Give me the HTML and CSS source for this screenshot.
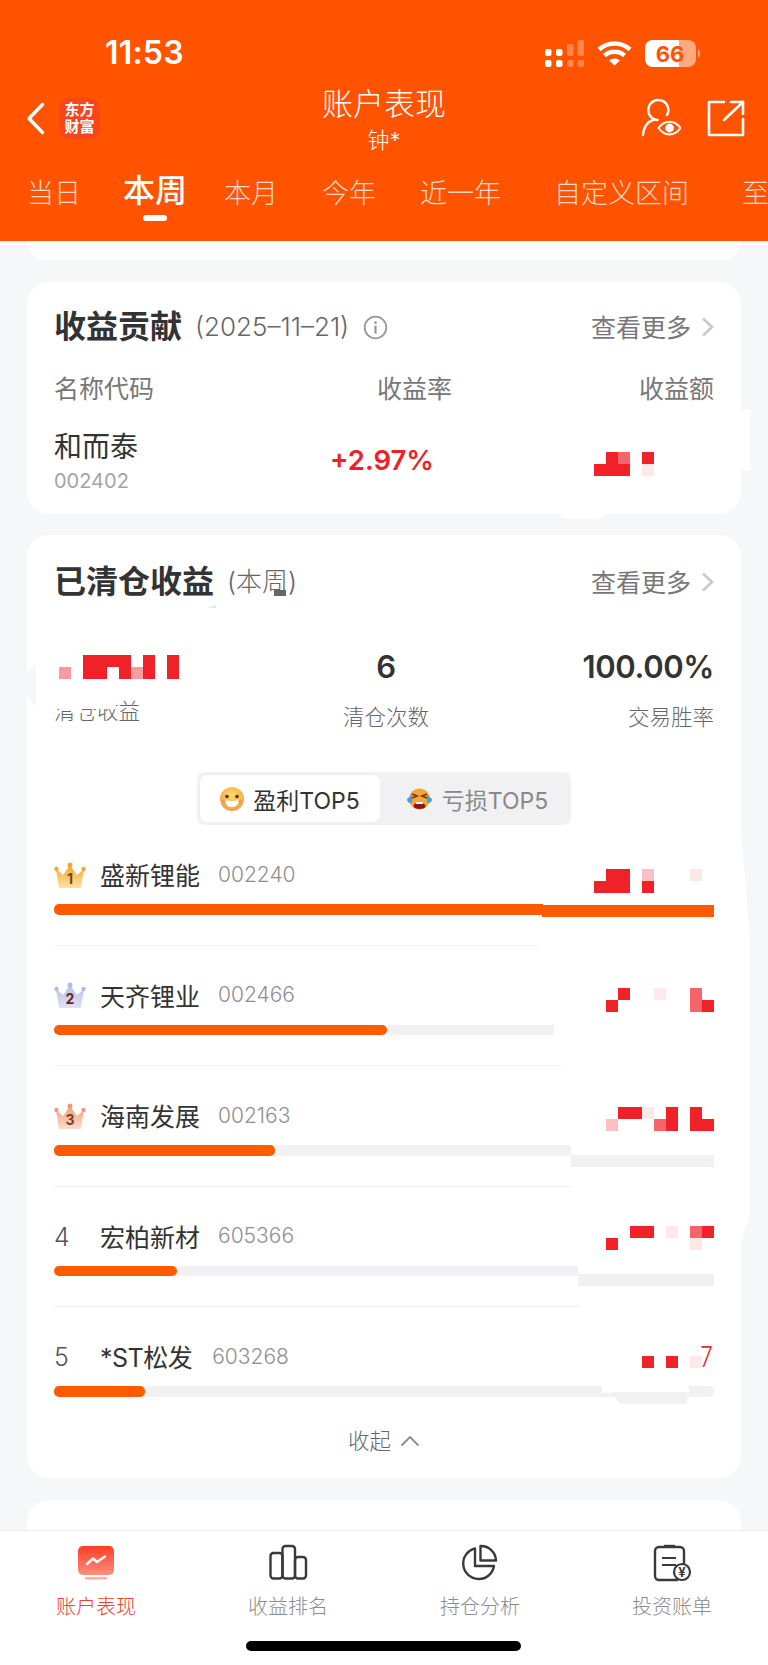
FILE: index.html
```html
<!DOCTYPE html>
<html lang="zh-CN">
<head>
    <meta charset="UTF-8">
    <meta name="viewport" content="width=device-width, initial-scale=1.0">
    <title>账户表现</title>
    <link rel="stylesheet" href="styles.css">
</head>
<body>
<div class="page">
    <header class="top">
        <div class="status">
            <span class="clock">11:53</span>
            <svg class="status-icons" width="156" height="28" viewBox="545 38 156 28">
                <g fill="#fff">
                    <rect x="545" y="47" width="6.5" height="7" rx="2"/>
                    <rect x="545" y="58" width="6.5" height="7" rx="2"/>
                    <rect x="556" y="47" width="6.5" height="7" rx="2"/>
                    <rect x="556" y="58" width="6.5" height="7" rx="2"/>
                </g>
                <g fill="#fff" opacity="0.3">
                    <rect x="567" y="42" width="6.5" height="12" rx="2"/>
                    <rect x="567" y="58" width="6.5" height="7" rx="2"/>
                    <rect x="577.5" y="38" width="6.5" height="16" rx="2"/>
                    <rect x="577.5" y="58" width="6.5" height="7" rx="2"/>
                </g>
                <g fill="none" stroke="#fff" stroke-width="4.6">
                    <path d="M599 47.5 C608 39.5 621 39.5 630 47.5"/>
                    <path d="M604.5 53.5 C610 48.5 619 48.5 624.5 53.5"/>
                </g>
                <path d="M609 58.5 C612 55.8 617 55.8 620 58.5 L614.5 63.5 Z" fill="#fff"/>
                <rect x="645" y="38" width="51" height="27" rx="8" fill="#fff" opacity="0.5"/>
                <path d="M653 38 H679 V65 H653 A8 8 0 0 1 645 57 V46 A8 8 0 0 1 653 38 Z" fill="#fff"/>
                <path d="M698 47 C700.5 48 700.5 55 698 56 Z" fill="#fff" opacity="0.5"/>
                <text class="battery-text" x="670" y="59.5" text-anchor="middle">66</text>
            </svg>
        </div>

        <div class="nav">
            <div class="nav-side">
                <svg class="back" width="19" height="33" viewBox="0 0 19 33">
                    <path d="M16.5 2.5 L3 16.5 L16.5 30.5" fill="none" stroke="#fff" stroke-width="3.4" stroke-linecap="round" stroke-linejoin="round"/>
                </svg>
                <div class="logo">东方<br>财富</div>
            </div>
            <div class="nav-title">
                <div class="title">账户表现</div>
                <div class="subtitle">钟*</div>
            </div>
            <div class="nav-side nav-right">
                <svg width="40" height="40" viewBox="0 0 40 40" fill="none" stroke="#fff" stroke-width="2.4" stroke-linecap="round">
                    <path d="M2 37 C2.5 28 7 23.5 13 21.5"/>
                    <path d="M26 17 A10 10 0 1 0 16.5 22"/>
                    <path d="M17.5 30 C23.5 21.5 33.5 21.5 39.5 30 C33.5 38.5 23.5 38.5 17.5 30 Z" stroke-width="2"/>
                    <circle cx="28.5" cy="30" r="4.4" fill="#fff" stroke="none"/>
                </svg>
                <svg width="38" height="38" viewBox="0 0 38 38" fill="none" stroke="#fff" stroke-width="2.6" stroke-linecap="round" stroke-linejoin="round">
                    <path d="M17 3 H2 V36 H36 V20"/>
                    <path d="M17 21 L36 3"/>
                    <path d="M24 3 H36 V15"/>
                </svg>
            </div>
        </div>

        <nav class="tabs">
            <span class="tab">当日</span>
            <span class="tab tab-active">本周</span>
            <span class="tab">本月</span>
            <span class="tab">今年</span>
            <span class="tab">近一年</span>
            <span class="tab tab-far">自定义区间</span>
            <span class="tab tab-far">至今</span>
        </nav>
    </header>

    <main class="content">
        <div class="stub"></div>

        <section class="card card-contrib">
            <span class="patch patch-side"></span>
            <span class="patch patch-bump"></span>
            <div class="card-head">
                <h2>收益贡献</h2>
                <span class="head-note">(2025–11–21)</span>
                <svg class="info" width="25" height="25" viewBox="0 0 25 25">
                    <circle cx="12.5" cy="12.5" r="10.8" fill="none" stroke="#999" stroke-width="1.8"/>
                    <circle cx="12.5" cy="7.6" r="1.4" fill="#999"/>
                    <rect x="11.4" y="10.6" width="2.2" height="8" fill="#999"/>
                </svg>
                <a class="more"><span class="more-text">查看更多</span>
                    <svg width="13" height="20" viewBox="0 0 13 20"><path d="M2 1.5 L11 10 L2 18.5" fill="none" stroke="#c9c9c9" stroke-width="2.6"/></svg>
                </a>
            </div>
            <div class="table-head">
                <span class="th-name">名称代码</span>
                <span>收益率</span>
                <span class="th-amount">收益额</span>
            </div>
            <div class="table-row">
                <div class="stock">
                    <div class="stock-name">和而泰</div>
                    <div class="stock-code">002402</div>
                </div>
                <div class="rate">+2.97%</div>
                <svg class="mosaic mosaic-table" width="120" height="24" viewBox="0 0 10 2" shape-rendering="crispEdges">
                    <rect class="m-red" x="1" y="0" width="1" height="1"/>
                    <rect class="m-mid" x="2" y="0" width="1" height="1"/>
                    <rect class="m-red" x="4" y="0" width="1" height="1"/>
                    <rect class="m-red" x="0" y="1" width="3" height="1"/>
                    <rect class="m-pale" x="4" y="1" width="1" height="1"/>
                </svg>
            </div>
        </section>

        <section class="card card-closed">
            <span class="patch patch-notch"></span>
            <span class="patch patch-edge"></span>
            <span class="patch patch-smudge"></span>
            <span class="patch patch-line"></span>
            <div class="card-head">
                <h2>已清仓收益</h2>
                <span class="head-note head-note-week">(本周)</span>
                <a class="more"><span class="more-text">查看更多</span>
                    <svg width="13" height="20" viewBox="0 0 13 20"><path d="M2 1.5 L11 10 L2 18.5" fill="none" stroke="#c9c9c9" stroke-width="2.6"/></svg>
                </a>
            </div>

            <div class="metrics">
                <div class="metric metric-left">
                    <svg class="mosaic-total" width="120" height="24" viewBox="0 0 10 2" shape-rendering="crispEdges">
                        <rect class="m-soft" x="0" y="1" width="1" height="1"/>
                        <rect class="m-red" x="2" y="0" width="4" height="1"/>
                        <rect class="m-red" x="2" y="1" width="2" height="1"/>
                        <rect class="m-red" x="5" y="1" width="1" height="1"/>
                        <rect class="m-soft" x="6" y="1" width="1" height="1"/>
                        <rect class="m-red" x="7" y="0" width="1" height="2"/>
                        <rect class="m-red" x="9" y="0" width="1" height="2"/>
                    </svg>
                    <div class="metric-label metric-label-cut">清仓收益
                        <span class="erase erase-top"></span>
                        <span class="erase erase-gap"></span>
                    </div>
                </div>
                <div class="metric metric-mid">
                    <div class="metric-value">6</div>
                    <div class="metric-label">清仓次数</div>
                </div>
                <div class="metric metric-right">
                    <div class="metric-value">100.00%</div>
                    <div class="metric-label">交易胜率</div>
                </div>
            </div>

            <div class="segment">
                <div class="seg-item seg-active">
                    <svg width="24" height="24" viewBox="0 0 24 24">
                        <defs>
                            <radialGradient id="smile" cx="50%" cy="35%" r="70%">
                                <stop offset="0" stop-color="#ffdc6a"/>
                                <stop offset="1" stop-color="#f29a3c"/>
                            </radialGradient>
                        </defs>
                        <circle cx="12" cy="12" r="12" fill="url(#smile)"/>
                        <circle cx="7" cy="9.5" r="1.8" fill="#5b3410"/>
                        <circle cx="17" cy="9.5" r="1.8" fill="#5b3410"/>
                        <path d="M5 12.5 C9 14.5 15 14.5 19 12.5 C18.5 18.5 15 20 12 20 C9 20 5.500 18.5 5 12.5 Z" fill="#fff"/>
                        <circle cx="3.800" cy="14.500" r="2" fill="#f58a5a" opacity="0.6"/>
                        <circle cx="20.200" cy="14.500" r="2" fill="#f58a5a" opacity="0.6"/>
                    </svg>
                    <span>盈利TOP5</span>
                </div>
                <div class="seg-item seg-loss">
                    <svg width="27" height="24" viewBox="0 0 27 24">
                        <circle cx="13.500" cy="12" r="10.500" fill="#f7a33b"/>
                        <path d="M6 7 L11 9 L6 11 M21 7 L16 9 L21 11" fill="none" stroke="#6b3b12" stroke-width="1.600"/>
                        <path d="M1 12 L6 8 L6 15 C5 17 1 16 1 12 Z M26 12 L21 8 L21 15 C22 17 26 16 26 12 Z" fill="#3e9ee8"/>
                        <path d="M7.500 20 C8 13 19 13 19.500 20 C17 22.500 10 22.500 7.500 20 Z" fill="#8f1414"/>
                        <path d="M9.500 15.800 C11.500 14.500 15.500 14.500 17.500 15.800 L17 17 H10 Z" fill="#fff"/>
                    </svg>
                    <span class="seg-muted">亏损TOP5</span>
                </div>
            </div>

            <div class="rank-row">
                <div class="rank-head">
                    <svg class="crown" width="32" height="27" viewBox="0 0 32 27">
                        <defs>
                            <linearGradient id="gold" x1="0" y1="0" x2="0" y2="1"><stop offset="0" stop-color="#f4a52c"/><stop offset="1" stop-color="#fce3a4"/></linearGradient>
                        </defs>
                        <path d="M5 26 L2 7 L9 13 L16 3 L23 13 L30 7 L27 26 Z" fill="url(#gold)"/>
                        <circle cx="16" cy="3" r="2.500" fill="#f4a52c"/><circle cx="2.500" cy="7" r="2.200" fill="#f4a52c"/><circle cx="29.500" cy="7" r="2.200" fill="#f4a52c"/>
                        <text class="crown-num" x="16" y="22" text-anchor="middle" fill="#6d4a12">1</text>
                    </svg>
                    <span class="rank-name">盛新锂能</span>
                    <span class="rank-code">002240</span>
                    <svg class="mosaic mosaic-1" width="120" height="24" viewBox="0 0 10 2" shape-rendering="crispEdges">
                        <rect class="m-red" x="1" y="0" width="2" height="2"/>
                        <rect class="m-light" x="4" y="0" width="1" height="1"/>
                        <rect class="m-pale" x="8" y="0" width="1" height="1"/>
                        <rect class="m-red" x="0" y="1" width="1" height="1"/>
                        <rect class="m-red" x="4" y="1" width="1" height="1"/>
                    </svg>
                </div>
                <div class="bar bar-short-1">
                    <div class="bar-fill bar-fill-flat" style="width: 100%"></div>
                    <span class="bar-piece piece-1"></span>
                </div>
            </div>
            <div class="rank-line line-1"></div>

            <div class="rank-row">
                <div class="rank-head">
                    <svg class="crown" width="32" height="27" viewBox="0 0 32 27">
                        <defs>
                            <linearGradient id="silver" x1="0" y1="0" x2="0" y2="1"><stop offset="0" stop-color="#b8bfe6"/><stop offset="1" stop-color="#dfe2f5"/></linearGradient>
                        </defs>
                        <path d="M5 26 L2 7 L9 13 L16 3 L23 13 L30 7 L27 26 Z" fill="url(#silver)"/>
                        <circle cx="16" cy="3" r="2.500" fill="#b4bbe2"/><circle cx="2.500" cy="7" r="2.200" fill="#b4bbe2"/><circle cx="29.500" cy="7" r="2.200" fill="#b4bbe2"/>
                        <text class="crown-num" x="16" y="22" text-anchor="middle" fill="#6a2417">2</text>
                    </svg>
                    <span class="rank-name">天齐锂业</span>
                    <span class="rank-code">002466</span>
                    <svg class="mosaic mosaic-2" width="120" height="24" viewBox="0 0 10 2" shape-rendering="crispEdges">
                        <rect class="m-red" x="2" y="0" width="1" height="1"/>
                        <rect class="m-pale" x="5" y="0" width="1" height="1"/>
                        <rect class="m-mid" x="8" y="0" width="1" height="2"/>
                        <rect class="m-red" x="1" y="1" width="1" height="1"/>
                        <rect class="m-red" x="9" y="1" width="1" height="1"/>
                    </svg>
                </div>
                <div class="bar bar-short-2">
                    <div class="bar-fill" style="width: 66.6%"></div>
                </div>
            </div>
            <div class="rank-line line-2"></div>

            <div class="rank-row">
                <div class="rank-head">
                    <svg class="crown" width="32" height="27" viewBox="0 0 32 27">
                        <defs>
                            <linearGradient id="copper" x1="0" y1="0" x2="0" y2="1"><stop offset="0" stop-color="#ee9f7d"/><stop offset="1" stop-color="#fbdccb"/></linearGradient>
                        </defs>
                        <path d="M5 26 L2 7 L9 13 L16 3 L23 13 L30 7 L27 26 Z" fill="url(#copper)"/>
                        <circle cx="16" cy="3" r="2.500" fill="#ec9b78"/><circle cx="2.500" cy="7" r="2.200" fill="#ec9b78"/><circle cx="29.500" cy="7" r="2.200" fill="#ec9b78"/>
                        <text class="crown-num" x="16" y="22" text-anchor="middle" fill="#7c3d22">3</text>
                    </svg>
                    <span class="rank-name">海南发展</span>
                    <span class="rank-code">002163</span>
                    <svg class="mosaic mosaic-3" width="120" height="24" viewBox="0 0 10 2" shape-rendering="crispEdges">
                        <rect class="m-red" x="2" y="0" width="2" height="1"/>
                        <rect class="m-pale" x="4" y="0" width="1" height="1"/>
                        <rect class="m-red" x="6" y="0" width="1" height="2"/>
                        <rect class="m-red" x="8" y="0" width="1" height="2"/>
                        <rect class="m-light" x="1" y="1" width="1" height="1"/>
                        <rect class="m-mid" x="5" y="1" width="1" height="1"/>
                        <rect class="m-red" x="9" y="1" width="1" height="1"/>
                    </svg>
                </div>
                <div class="bar bar-short-3">
                    <div class="bar-fill" style="width: 42.7%"></div>
                    <span class="bar-piece bar-piece-grey piece-3"></span>
                </div>
            </div>
            <div class="rank-line line-3"></div>

            <div class="rank-row">
                <div class="rank-head">
                    <span class="rank-num">4</span>
                    <span class="rank-name">宏柏新材</span>
                    <span class="rank-code">605366</span>
                    <svg class="mosaic mosaic-4" width="120" height="24" viewBox="0 0 10 2" shape-rendering="crispEdges">
                        <rect class="m-red" x="3" y="0" width="2" height="1"/>
                        <rect class="m-pale" x="6" y="0" width="1" height="1"/>
                        <rect class="m-mid" x="8" y="0" width="1" height="1"/>
                        <rect class="m-red" x="9" y="0" width="1" height="1"/>
                        <rect class="m-red" x="1" y="1" width="1" height="1"/>
                        <rect class="m-pale" x="8" y="1" width="1" height="1"/>
                    </svg>
                </div>
                <div class="bar bar-short-4">
                    <div class="bar-fill" style="width: 23.5%"></div>
                    <span class="bar-piece bar-piece-grey piece-4"></span>
                </div>
            </div>
            <div class="rank-line line-4"></div>

            <div class="rank-row rank-row-last">
                <div class="rank-head">
                    <span class="rank-num">5</span>
                    <span class="rank-name rank-name-st">*ST松发</span>
                    <span class="rank-code rank-code-tight">603268</span>
                    <svg class="mosaic mosaic-5" width="120" height="24" viewBox="0 0 10 2" shape-rendering="crispEdges">
                        <rect class="m-red" x="4" y="0" width="1" height="1"/>
                        <rect class="m-red" x="6" y="0" width="1" height="1"/>
                        <rect class="m-pale" x="8" y="0" width="1" height="1"/>
                    </svg>
                    <span class="stray-digit">7</span>
                </div>
                <div class="bar">
                    <div class="bar-fill" style="width: 13.8%"></div>
                    <span class="bar-piece piece-5-white"></span>
                    <span class="bar-piece bar-piece-grey piece-5-grey"></span>
                </div>
            </div>

            <div class="collapse">收起
                <svg width="20" height="12" viewBox="0 0 20 12"><path d="M1.500 10.500 L10 2 L18.500 10.500" fill="none" stroke="#8a8a8a" stroke-width="1.800"/></svg>
            </div>
        </section>

        <div class="card card-next"></div>
    </main>

    <footer class="tabbar">
        <div class="tabbar-items">
            <div class="bar-tab bar-tab-on">
                <svg width="40" height="38" viewBox="0 0 40 38">
                    <defs>
                        <linearGradient id="screen" x1="0" y1="0" x2="0" y2="1"><stop offset="0" stop-color="#ff3c22"/><stop offset="1" stop-color="#ff8f80"/></linearGradient>
                    </defs>
                    <rect x="2" y="2" width="36" height="29" rx="5" fill="url(#screen)"/>
                    <rect x="9" y="33" width="22" height="2.600" fill="#ffb2a8"/>
                    <path d="M11 20 L17 14.500 L21 18 L29 12.500" fill="none" stroke="#fff" stroke-width="2.400" stroke-linecap="round" stroke-linejoin="round"/>
                </svg>
                <span>账户表现</span>
            </div>
            <div class="bar-tab">
                <svg width="40" height="38" viewBox="0 0 40 38" fill="none" stroke="#3a3a3a" stroke-width="2.400" stroke-linejoin="round">
                    <rect x="2.500" y="9" width="12" height="25.500" rx="3"/>
                    <rect x="14.500" y="2" width="12.500" height="32.500" rx="3"/>
                    <rect x="27" y="13" width="11" height="21.500" rx="3"/>
                </svg>
                <span>收益排名</span>
            </div>
            <div class="bar-tab">
                <svg width="40" height="38" viewBox="1 0 40 38" fill="none" stroke="#3a3a3a" stroke-width="2.400" stroke-linejoin="round">
                    <path d="M16 4.500 A15.500 15.500 0 1 0 35 22 H16 Z"/>
                    <path d="M21.500 2 A15 15 0 0 1 37 16.500 H21.500 Z"/>
                </svg>
                <span>持仓分析</span>
            </div>
            <div class="bar-tab">
                <svg width="40" height="38" viewBox="0 0 40 38">
                    <path d="M26 36 H7 A4 4 0 0 1 3 32 V7 A4 4 0 0 1 7 3 H28 A4 4 0 0 1 32 7 V20" fill="none" stroke="#3a3a3a" stroke-width="2.400"/>
                    <path d="M12 2 H23" stroke="#3a3a3a" stroke-width="2.400"/>
                    <path d="M10 14 H24 M10 21 H24" stroke="#3a3a3a" stroke-width="2.200"/>
                    <circle cx="30" cy="28" r="8" fill="#fff" stroke="#3a3a3a" stroke-width="2.200"/>
                    <text class="yen" x="30" y="32.500" text-anchor="middle">¥</text>
                </svg>
                <span>投资账单</span>
            </div>
        </div>
        <div class="home-bar"></div>
    </footer>
</div>
</body>
</html>
```

FILE: styles.css
```css
* {
  box-sizing: border-box;
}

html,
body {
  margin: 0;
  padding: 0;
}

body {
  font-family: Inter, "Noto Sans CJK SC", sans-serif;
  color: #333;
  background-color: #f6f7f9;
}

.page {
  width: 768px;
  height: 1665px;
  display: flex;
  flex-direction: column;
  overflow: hidden;
}

/* orange header */
.top {
  height: 241px;
  flex: none;
  color: #fff;
  background-color: #ff5300;
  overflow: hidden;
}

.status {
  height: 36px;
  margin-top: 34px;
  padding: 0 67px 0 105px;
  display: flex;
  align-items: center;
  justify-content: space-between;
}

.clock {
  font-size: 32px;
  font-weight: 600;
  letter-spacing: 0.2px;
}

.status-icons {
  margin-top: 3px;
}

.battery-text {
  font-family: Inter, sans-serif;
  font-size: 22px;
  font-weight: 700;
  fill: #ff5300;
}

.nav {
  height: 72px;
  margin-top: 12px;
  padding: 0 23px 0 26px;
  display: flex;
  align-items: center;
}

.nav-side {
  flex: 1;
  display: flex;
  align-items: center;
  gap: 14px;
}

.nav-right {
  justify-content: flex-end;
  gap: 26px;
}

.back {
  flex: none;
}

.logo {
  width: 41px;
  height: 41px;
  padding-top: 3px;
  border-radius: 10px;
  background-color: #f4481a;
  font-size: 15px;
  line-height: 17px;
  font-weight: 700;
  text-align: center;
}

.nav-title {
  padding-top: 2px;
  padding-right: 3px;
  text-align: center;
}

.title {
  font-size: 31px;
  line-height: 40px;
  font-weight: 300;
}

.subtitle {
  margin-top: 2px;
  font-size: 22px;
  line-height: 28px;
  font-weight: 300;
}

.tabs {
  height: 40px;
  margin-top: 20px;
  padding-left: 27px;
  display: flex;
  white-space: nowrap;
}

.tab {
  flex: none;
  margin-right: 44px;
  font-size: 27px;
  line-height: 40px;
  font-weight: 300;
  color: rgba(255, 255, 255, 0.78);
}

.tab-active {
  position: relative;
  top: -3px;
  margin-left: -2px;
  margin-right: 37px;
  font-size: 32px;
  font-weight: 500;
  color: #fff;
}

.tab-active::after {
  content: "";
  position: absolute;
  left: 50%;
  bottom: -10px;
  width: 24px;
  height: 6px;
  margin-left: -12px;
  border-radius: 3px;
  background-color: #fff;
}

.tab-far {
  margin-left: 9px;
}

.tab:last-child {
  margin-right: 0;
}

/* scroll area */
.content {
  flex: 1;
  min-height: 0;
  padding: 0 27px;
  overflow: hidden;
}

.stub {
  height: 19px;
  background-color: #fff;
  border-radius: 0 0 20px 20px;
}

.card {
  position: relative;
  margin-top: 21px;
  padding: 0 27px;
  background-color: #fff;
  border-radius: 22px;
}

.card h2 {
  margin: 0;
  font-size: 32px;
  line-height: 36px;
  font-weight: 700;
}

.card-head {
  display: flex;
  align-items: center;
}

.head-note {
  margin-left: 13px;
  font-size: 26px;
  line-height: 36px;
  font-weight: 300;
  color: #666;
}

.info {
  margin-left: 14px;
}

.more {
  margin-left: auto;
  display: flex;
  align-items: center;
  gap: 10px;
  font-size: 25px;
  color: #777;
}

.more-text {
  padding-top: 2px;
  line-height: 34px;
}

.card-contrib {
  margin-top: 22px;
  height: 232px;
  padding-top: 27px;
}

.table-head {
  margin-top: 27px;
  display: flex;
  font-size: 25px;
  line-height: 34px;
  color: #777;
}

.th-name {
  width: 323px;
}

.th-amount {
  margin-left: auto;
}

.table-row {
  margin-top: 24px;
  display: flex;
}

.stock {
  width: 276px;
}

.stock-name {
  font-size: 28px;
  line-height: 34px;
}

.stock-code {
  margin-top: 5px;
  font-size: 20px;
  line-height: 24px;
  color: #a3a3a3;
}

.rate {
  margin-top: 13px;
  font-size: 27.5px;
  line-height: 34px;
  font-weight: 600;
  color: #ee2128;
}

.mosaic {
  margin-left: auto;
  flex: none;
}

.mosaic-table {
  margin-top: 22px;
}

.m-red {
  fill: #f12227;
}

.m-mid {
  fill: #f7636a;
}

.m-soft {
  fill: #fb9aa0;
}

.m-light {
  fill: #fbc0c4;
}

.m-pale {
  fill: #fde8ea;
}

/* retouched spots in the shot */
.patch {
  position: absolute;
}

.patch-side {
  left: 714px;
  top: 128px;
  width: 9px;
  height: 60px;
  background-color: #fff;
}

.patch-bump {
  left: 534px;
  top: 232px;
  width: 43px;
  height: 5px;
  background-color: #fff;
  border-radius: 0 0 50% 50%;
}

.patch-notch {
  left: 0;
  top: 128px;
  width: 9px;
  height: 44px;
  background-color: #f6f7f9;
  clip-path: polygon(100% 0, 100% 100%, 0 75%, 0 25%);
}

.patch-edge {
  left: 714px;
  top: 295px;
  width: 9px;
  height: 410px;
  background-color: #fff;
  clip-path: polygon(0 0, 100% 27%, 100% 94%, 0 100%);
}

.patch-smudge {
  left: 247px;
  top: 55px;
  width: 12px;
  height: 6px;
  background-color: #666;
}

.patch-line {
  left: 180px;
  top: 70px;
  width: 9px;
  height: 3px;
  background-color: #e8e8e8;
  clip-path: polygon(0 100%, 100% 0, 100% 100%);
}

.card-closed {
  height: 943px;
  padding-top: 29px;
}

.metrics {
  margin-top: 45px;
  display: grid;
  grid-template-columns: 220px 224px 216px;
}

.metric-mid {
  text-align: center;
}

.metric-right {
  text-align: right;
}

.metric-value {
  padding-top: 2px;
  font-size: 31px;
  line-height: 40px;
  font-weight: 600;
  letter-spacing: -0.4px;
}

.mosaic-total {
  display: block;
  margin: 10px 0 6px 5px;
}

.metric-label {
  position: relative;
  margin-top: 15px;
  font-size: 21.5px;
  line-height: 30px;
  font-weight: 300;
  color: #666;
}

.metric-label-cut {
  margin-top: 17px;
}

.erase {
  position: absolute;
  background-color: #fff;
}

.erase-top {
  left: 0;
  top: 0;
  width: 62px;
  height: 13px;
}

.erase-gap {
  left: 17px;
  top: 11px;
  width: 11px;
  height: 6px;
}

.segment {
  width: 374px;
  height: 53px;
  margin: 40px auto 0;
  padding: 3px;
  display: flex;
  background-color: #f1f1f4;
  border-radius: 8px;
}

.seg-item {
  flex: 1;
  display: flex;
  align-items: center;
  justify-content: center;
  gap: 9px;
  font-size: 23px;
  border-radius: 8px;
}

.seg-active {
  flex: none;
  width: 180px;
  background-color: #fff;
}

.seg-loss {
  padding-left: 6px;
}

.seg-muted {
  color: #888;
}

.rank-row {
  padding-top: 35px;
  padding-bottom: 30px;
}

.rank-row-last {
  padding-bottom: 0;
}

.rank-head {
  position: relative;
  height: 30px;
  display: flex;
  align-items: center;
}

.crown {
  flex: none;
  width: 32px;
  margin-right: 14px;
}

.crown-num {
  font-family: Inter, sans-serif;
  font-size: 14px;
  font-weight: 700;
}

.rank-num {
  width: 46px;
  flex: none;
  font-size: 25px;
  font-weight: 300;
  color: #555;
}

.rank-name {
  padding-bottom: 2px;
  font-size: 25px;
}

.rank-name-st {
  letter-spacing: -0.5px;
}

.rank-code {
  margin-left: 18px;
  padding-bottom: 2px;
  font-size: 21px;
  font-weight: 300;
  color: #8f8f8f;
}

.rank-code-tight {
  margin-left: 20px;
}

.rank-head .mosaic {
  align-self: flex-start;
}

.mosaic-1 {
  margin-top: 9px;
}

.mosaic-2 {
  margin-top: 7px;
}

.mosaic-3 {
  margin-top: 6px;
}

.mosaic-4 {
  margin-top: 4px;
}

.mosaic-5 {
  margin-top: 14px;
}

.stray-digit {
  position: absolute;
  right: 1px;
  top: 0;
  font-size: 28px;
  line-height: 30px;
  font-weight: 300;
  color: #e9272d;
  transform: scaleX(0.8);
  transform-origin: right center;
}

.bar {
  position: relative;
  width: 660px;
  height: 10.5px;
  margin-top: 14px;
  background-color: #f1f1f4;
  border-radius: 5px;
}

.bar-short-1 {
  width: 489px;
  border-radius: 5px 0 0 5px;
}

.bar-short-2 {
  width: 500px;
  border-radius: 5px 0 0 5px;
}

.bar-short-3 {
  width: 517px;
  border-radius: 5px 0 0 5px;
}

.bar-short-4 {
  width: 524px;
  border-radius: 5px 0 0 5px;
}

.bar-fill {
  height: 100%;
  background-color: #ff5a00;
  border-radius: 5px;
}

.bar-fill-flat {
  border-radius: 5px 0 0 5px;
}

.bar-piece {
  position: absolute;
  height: 12px;
}

.bar-piece-grey {
  background-color: #f1f1f4;
}

.piece-1 {
  left: 488px;
  top: 1px;
  width: 172px;
  background-color: #ff5a00;
}

.piece-3 {
  left: 517px;
  top: 10px;
  width: 143px;
}

.piece-4 {
  left: 524px;
  top: 8px;
  width: 136px;
}

.piece-5-white {
  left: 548px;
  top: 0;
  width: 87px;
  height: 7px;
  background-color: #fff;
}

.piece-5-grey {
  left: 557px;
  top: 6px;
  width: 76px;
  clip-path: polygon(0 0, 100% 0, 100% 100%, 12% 100%);
}

.rank-line {
  height: 1px;
  background-color: #f0f0f2;
}

.line-1 {
  width: 485px;
}

.line-2 {
  width: 507px;
}

.line-3 {
  width: 517px;
}

.line-4 {
  width: 526px;
}

.collapse {
  margin-top: 29px;
  display: flex;
  align-items: center;
  justify-content: center;
  gap: 9px;
  font-size: 21.5px;
  line-height: 30px;
  font-weight: 300;
  color: #666;
}

.card-next {
  height: 80px;
  margin-top: 22px;
}

/* bottom bar */
.tabbar {
  position: relative;
  height: 135px;
  flex: none;
  background-color: #fff;
  border-top: 1px solid #eeeeee;
}

.tabbar-items {
  display: flex;
  padding-top: 13px;
}

.bar-tab {
  width: 192px;
  display: flex;
  flex-direction: column;
  align-items: center;
  font-size: 20px;
  line-height: 28px;
  font-weight: 300;
  color: #8c8c8c;
}

.bar-tab svg {
  margin-bottom: 11px;
}

.bar-tab-on {
  color: #f0402b;
}

.yen {
  font-family: Inter, sans-serif;
  font-size: 13px;
  font-weight: 700;
  fill: #3a3a3a;
}

.home-bar {
  position: absolute;
  left: 246px;
  bottom: 14px;
  width: 275px;
  height: 10px;
  background-color: #000;
  border-radius: 5px;
}
```
